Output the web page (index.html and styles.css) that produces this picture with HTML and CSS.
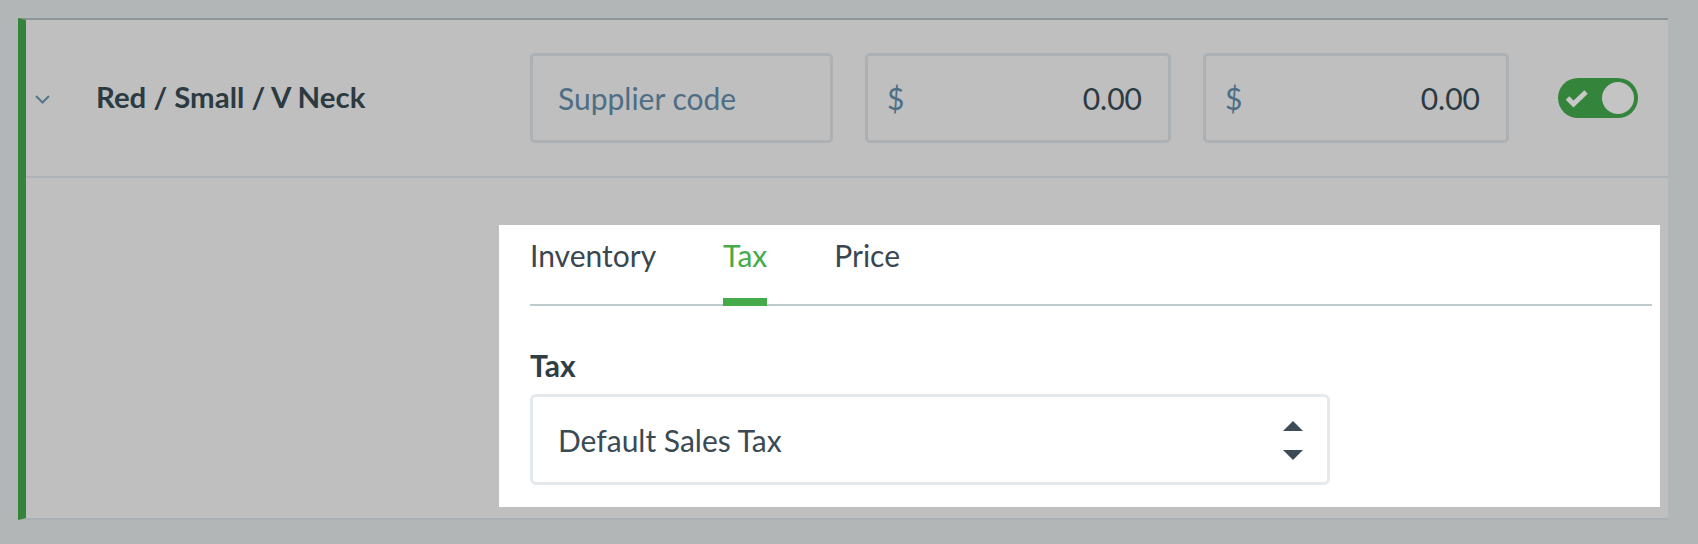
FILE: index.html
```html
<!DOCTYPE html>
<html lang="en">
<head>
<meta charset="utf-8">
<title>Variant</title>
<link rel="stylesheet" href="styles.css">
</head>
<body>
<div class="card">
  <div class="row">
    <span class="chevron">
      <svg width="15" height="9" viewBox="0 0 15 9"><polyline points="1,1 7.5,7.5 14,1" fill="none" stroke="#557589" stroke-width="2"/></svg>
    </span>
    <div class="name">Red / Small / V Neck</div>
    <div class="fields">
      <div class="field supplier"><span class="placeholder">Supplier code</span></div>
      <div class="field money"><span class="currency">$</span><span class="amount">0.00</span></div>
      <div class="field money"><span class="currency">$</span><span class="amount">0.00</span></div>
    </div>
    <div class="switch">
      <svg class="check" width="24" height="20" viewBox="0 0 24 20"><polyline points="2.5,10 8.5,16 21,4" fill="none" stroke="#c8c8c8" stroke-width="5" stroke-linejoin="miter"/></svg>
      <span class="knob"></span>
    </div>
  </div>
  <div class="detail">
    <div class="panel">
      <div class="tabs">
        <span class="tab">Inventory</span>
        <span class="tab active">Tax</span>
        <span class="tab">Price</span>
      </div>
      <div class="label">Tax</div>
      <div class="select">
        <span class="select-value">Default Sales Tax</span>
        <span class="arrows">
          <svg width="20" height="40" viewBox="0 0 20 40"><polygon points="10,0 20,10 0,10" fill="#3c4c56"/><polygon points="0,29 20,29 10,39" fill="#3c4c56"/></svg>
        </span>
      </div>
    </div>
  </div>
</div>
</body>
</html>
```

FILE: styles.css
```css
html, body {
  margin: 0;
  padding: 0;
}
html {
  height: 544px;
  overflow: hidden;
}
body {
  background: #b2b6b7;
  font-family: Lato, "Noto Sans", sans-serif;
  padding: 18px 30px 24px 18px;
  width: 1698px;
  height: 544px;
  box-sizing: border-box;
}
.card {
  background: #bfbfbf;
  border-left: 8px solid #35843c;
  border-top: 2px solid #8e9597;
  border-bottom: 2px solid #abafb1;
}
.row {
  display: flex;
  align-items: center;
  height: 156px;
  border-bottom: 2px solid #b0b3b5;
}
.chevron {
  display: flex;
  margin-left: 9px;
  width: 15px;
  margin-top: 2px;
}
.name {
  margin-left: 46px;
  margin-bottom: 4px;
  width: 434px;
  font-size: 29.4px;
  font-weight: 700;
  color: #2c3a42;
}
.fields {
  display: flex;
  gap: 32px;
}
.field {
  height: 90px;
  box-sizing: border-box;
  border: 3px solid #adb1b4;
  border-radius: 5px;
  display: flex;
  align-items: center;
  font-size: 30px;
}
.supplier {
  width: 303px;
  padding: 0 25px;
}
.placeholder {
  color: #4e6e85;
}
.money {
  width: 306px;
  padding: 0 26px 0 19px;
  justify-content: space-between;
}
.currency {
  color: #4e6e85;
}
.amount {
  color: #2c3a42;
}
.switch {
  margin-left: 49px;
  width: 80px;
  height: 40px;
  border-radius: 20px;
  background: #35843c;
  box-sizing: border-box;
  padding: 4px;
  display: flex;
  align-items: center;
  justify-content: space-between;
}
.check {
  margin-left: 3px;
}
.knob {
  width: 32px;
  height: 32px;
  border-radius: 50%;
  background: #c4c4c4;
}
.detail {
  height: 340px;
  box-sizing: border-box;
  padding: 47px 8px 11px 473px;
}
.panel {
  background: #ffffff;
  height: 282px;
  box-sizing: border-box;
  padding: 12px 8px 0 31px;
}
.tabs {
  display: flex;
  gap: 67px;
  border-bottom: 2px solid #bfcacb;
}
.tab {
  position: relative;
  font-size: 30px;
  line-height: 36px;
  padding-bottom: 31px;
  color: #3a4750;
}
.tab.active {
  color: #45ab4a;
}
.tab.active::after {
  content: "";
  position: absolute;
  left: 0;
  right: 0;
  bottom: -2px;
  height: 8px;
  background: #45ab4a;
}
.label {
  margin-top: 41px;
  font-size: 30px;
  line-height: 36px;
  font-weight: 700;
  color: #2f3d45;
}
.select {
  margin-top: 11px;
  width: 800px;
  height: 91px;
  box-sizing: border-box;
  border: 3px solid #e3e9ec;
  border-radius: 6px;
  display: flex;
  align-items: center;
  justify-content: space-between;
  padding: 0 24px 0 25px;
}
.select-value {
  font-size: 30px;
  color: #3a4a54;
}
.arrows {
  display: flex;
  margin-top: 2px;
}
```
